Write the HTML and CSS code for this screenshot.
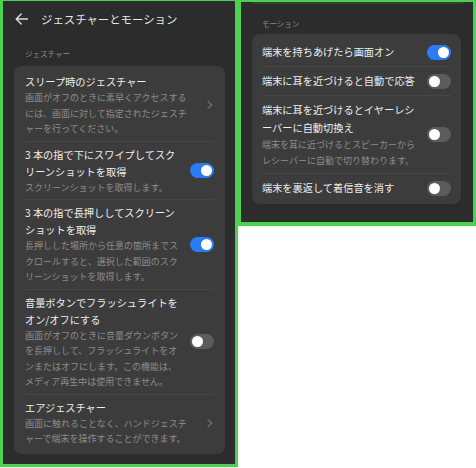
FILE: index.html
```html
<!DOCTYPE html>
<html>
	<head>
		<meta charset="UTF-8">
		<title>ジェスチャーとモーション</title>
		<link rel="stylesheet" href="styles.css">
	</head>
	<body>
		<div class="shots">
			<!-- 左：ジェスチャー -->
			<div class="phone left">
				<div class="topbar">
					<svg class="back" width="13" height="12" viewBox="0 0 13 12">
						<path d="M12.5 6H1.2M6.2 1L1.2 6l5 5" fill="none" stroke="#dcdcdc" stroke-width="1.4" stroke-linecap="round" stroke-linejoin="round"/>
					</svg>
					<span class="title">ジェスチャーとモーション</span>
				</div>
				<div class="label">ジェスチャー</div>
				<div class="card">
					<div class="item">
						<div class="text">
							<div class="t">スリープ時のジェスチャー</div>
							<div class="s">画面がオフのときに素早くアクセスする<br>には、画面に対して指定されたジェスチ<br>ャーを行ってください。</div>
						</div>
						<i class="chev"></i>
					</div>
					<div class="item">
						<div class="text">
							<div class="t">3 本の指で下にスワイプしてスク<br>リーンショットを取得</div>
							<div class="s">スクリーンショットを取得します。</div>
						</div>
						<i class="sw on"></i>
					</div>
					<div class="item">
						<div class="text">
							<div class="t">3 本の指で長押ししてスクリーン<br>ショットを取得</div>
							<div class="s">長押しした場所から任意の箇所までス<br>クロールすると、選択した範囲のスク<br>リーンショットを取得します。</div>
						</div>
						<i class="sw on"></i>
					</div>
					<div class="item">
						<div class="text">
							<div class="t">音量ボタンでフラッシュライトを<br>オン/オフにする</div>
							<div class="s">画面がオフのときに音量ダウンボタン<br>を長押しして、フラッシュライトをオ<br>ンまたはオフにします。この機能は、<br>メディア再生中は使用できません。</div>
						</div>
						<i class="sw"></i>
					</div>
					<div class="item">
						<div class="text">
							<div class="t">エアジェスチャー</div>
							<div class="s">画面に触れることなく、ハンドジェスチ<br>ャーで端末を操作することができます。</div>
						</div>
						<i class="chev"></i>
					</div>
				</div>
			</div>

			<!-- 右：モーション -->
			<div class="phone right">
				<div class="prev"></div>
				<div class="label">モーション</div>
				<div class="card">
					<div class="item row">
						<div class="text">
							<div class="t">端末を持ちあげたら画面オン</div>
						</div>
						<i class="sw on"></i>
					</div>
					<div class="item row">
						<div class="text">
							<div class="t">端末に耳を近づけると自動で応答</div>
						</div>
						<i class="sw"></i>
					</div>
					<div class="item row">
						<div class="text">
							<div class="t">端末に耳を近づけるとイヤーレシ<br>ーバーに自動切換え</div>
							<div class="s">端末を耳に近づけるとスピーカーから<br>レシーバーに自動で切り替わります。</div>
						</div>
						<i class="sw"></i>
					</div>
					<div class="item row">
						<div class="text">
							<div class="t">端末を裏返して着信音を消す</div>
						</div>
						<i class="sw"></i>
					</div>
				</div>
			</div>
		</div>
	</body>
</html>
```

FILE: styles.css
```css
body{
	margin: 0;
	background: #fff;
	font-family: "Noto Sans CJK JP", "Noto Sans", sans-serif;
}
.shots{
	display: flex;
	align-items: flex-start;
}
.phone{
	width: 238px;
	box-sizing: border-box;
	background: #2c2c2c;
	border: 3px solid #4ad14f;
}
.left{
	height: 467px;
	border-top-width: 1px;
}
.right{
	height: 226px;
	border-top-width: 2px;
	border-bottom-width: 4px;
}
.topbar{
	height: 36px;
	display: flex;
	align-items: center;
	padding-left: 12px;
	gap: 13px;
}
.back{
	display: block;
}
.title{
	font-size: 11.4px;
	line-height: 16px;
	color: #e8e8e8;
}
.label{
	font-size: 7.5px;
	line-height: 12px;
	color: #8a8a8a;
	padding: 11px 0 0 22px;
	margin-bottom: 6px;
}
.card{
	margin: 0 10px 0 11px;
	background: #3c3c3c;
	border-radius: 8px;
	padding: 3px 11px;
}
.item{
	display: flex;
	align-items: center;
	padding: 4px 0;
	border-top: 1px solid #474747;
}
.item:first-child{
	border-top: none;
}
.text{
	flex: 1;
}
.t{
	font-size: 10.2px;
	line-height: 17px;
	color: #eeeeee;
}
.s{
	font-size: 9px;
	line-height: 15.5px;
	color: #8c8c8c;
}
.chev{
	width: 5px;
	height: 5px;
	border-top: 1px solid #7a7a7a;
	border-right: 1px solid #7a7a7a;
	transform: rotate(45deg);
	margin-right: 3px;
}
.sw{
	width: 24px;
	height: 15px;
	border-radius: 8px;
	background: #5c5c5c;
	display: flex;
	align-items: center;
	padding: 0 2px;
	box-sizing: border-box;
}
.sw:before{
	content: "";
	width: 11px;
	height: 11px;
	border-radius: 50%;
	background: #fff;
}
.sw.on{
	background: #2a7cf6;
	justify-content: flex-end;
}

/* 右の画面 */
.prev{
	height: 2px;
	margin: 0 8px 0 11px;
	background: #3c3c3c;
	border-radius: 0 0 6px 6px;
}
.right .label{
	padding: 14px 0 0 21px;
	margin-bottom: 4px;
}
.right .card{
	padding: 4px 10px 2px;
	margin-right: 12px;
}
.row{
	padding: 5px 0;
}
.right .t{
	line-height: 18px;
}
```
